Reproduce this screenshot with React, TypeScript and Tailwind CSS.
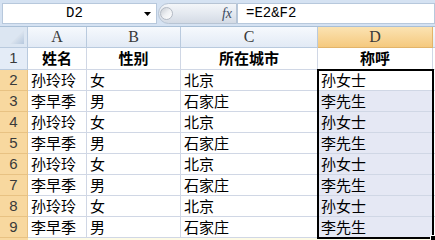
import React from 'react'

const rows = [
  ['孙玲玲', '女', '北京', '孙女士'],
  ['李早季', '男', '石家庄', '李先生'],
  ['孙玲玲', '女', '北京', '孙女士'],
  ['李早季', '男', '石家庄', '李先生'],
  ['孙玲玲', '女', '北京', '孙女士'],
  ['李早季', '男', '石家庄', '李先生'],
  ['孙玲玲', '女', '北京', '孙女士'],
  ['李早季', '男', '石家庄', '李先生'],
]

const cjk = "font-['Noto_Sans_CJK_SC','Noto_Sans',sans-serif]"

function FormulaBar() {
  return (
    <div className="h-[27px] flex items-start pt-[3px] bg-[#d5e2f2] border-b border-[#a9bfd6]">
      {/* Name box */}
      <div className="ml-[2px] w-[155px] h-[21px] bg-white border border-[#b7c8dc] flex items-center">
        <span className="flex-1 text-center pl-[2px] font-['Liberation_Mono',monospace] text-[14px] text-black">D2</span>
        <svg width="7" height="4" viewBox="0 0 7 4" className="mr-[5px]">
          <path d="M0 0H7L3.5 4Z" fill="#000" />
        </svg>
      </div>
      {/* handle + fx */}
      <div className="ml-[1px] h-[21px] w-[79px] flex items-center rounded-l-full bg-gradient-to-b from-[#f4f6f9] via-[#e4e9f0] to-[#d4dbe5] border border-[#b7c4d4]">
        <div className="w-[13px] h-[13px] ml-[1px] rounded-full bg-gradient-to-br from-[#c8ccd2] via-[#eef0f3] to-[#ffffff] border border-[#b3bac4]" />
        <div className="flex-1" />
        <span className="mr-[4px] font-['Liberation_Serif',serif] italic text-[14px] text-[#3b4a5e] leading-none">fx</span>
      </div>
      {/* Formula input */}
      <div className="flex-1 h-[21px] bg-white border border-[#b7c8dc] flex items-center pl-[8px]">
        <span className="font-['Liberation_Mono',monospace] text-[14px] text-black">=E2&amp;F2</span>
      </div>
    </div>
  )
}

function ColHeader({ label, active }: { label: string; active?: boolean }) {
  return (
    <div
      className={`flex items-center justify-center border-r border-b font-['Liberation_Serif',serif] text-[16px] ${
        active
          ? 'bg-gradient-to-b from-[#fbe3b2] to-[#f5c97e] border-[#e2b46a] text-[#3a3a3a]'
          : 'bg-gradient-to-b from-[#f6f9fd] to-[#e2eaf5] border-[#b9cade] text-[#3a3a3a]'
      }`}
    >
      {label}
    </div>
  )
}

function RowHeader({ n, active }: { n: number; active?: boolean }) {
  return (
    <div
      className={`flex items-center justify-center border-r border-b font-['Liberation_Sans',sans-serif] text-[15px] text-[#3a3a3a] ${
        active ? 'bg-[#f8d89f] border-[#e8c283]' : 'bg-[#e4ecf7] border-[#b9cade]'
      }`}
    >
      {n}
    </div>
  )
}

function Cell({ text, bold, center, bg }: { text?: string; bold?: boolean; center?: boolean; bg?: string }) {
  return (
    <div
      className={`flex items-center border-r border-b border-[#d0d7e5] ${cjk} text-[15px] text-black whitespace-nowrap overflow-hidden ${
        center ? 'justify-center' : 'pl-[3px]'
      } ${bold ? 'font-bold' : ''} ${bg ?? 'bg-white'}`}
    >
      {text}
    </div>
  )
}

export default function App() {
  return (
    <div className="w-[435px] h-[240px] overflow-hidden relative bg-white">
      <FormulaBar />
      <div className="grid grid-cols-[28px_59px_94px_137px_115px_1fr] grid-rows-[21px_22px_repeat(8,21px)_20px]">
        {/* Corner */}
        <div className="bg-[#dce6f2] border-r border-b border-[#b9cade] flex items-end justify-end p-[3px]">
          <svg width="14" height="14" viewBox="0 0 14 14">
            <defs>
              <linearGradient id="tri" x1="0" y1="0" x2="1" y2="1">
                <stop offset="0" stopColor="#ffffff" />
                <stop offset="1" stopColor="#b6c8de" />
              </linearGradient>
            </defs>
            <path d="M14 0V14H0Z" fill="url(#tri)" />
          </svg>
        </div>
        <ColHeader label="A" />
        <ColHeader label="B" />
        <ColHeader label="C" />
        <ColHeader label="D" active />
        <div className="bg-gradient-to-b from-[#f6f9fd] to-[#e2eaf5] border-b border-[#b9cade]" />

        {/* Row 1 */}
        <RowHeader n={1} />
        <Cell text="姓名" bold center />
        <Cell text="性别" bold center />
        <Cell text="所在城市" bold center />
        <Cell text="称呼" bold center />
        <Cell />

        {rows.map((r, i) => (
          <React.Fragment key={i}>
            <RowHeader n={i + 2} active />
            <Cell text={r[0]} />
            <Cell text={r[1]} />
            <Cell text={r[2]} />
            <Cell text={r[3]} bg={i === 0 ? 'bg-white' : 'bg-[#e5e8f4]'} />
            <Cell />
          </React.Fragment>
        ))}

        {/* Row 10 (partially visible) */}
        <div className="bg-[#f8d89f]" />
        <div className="bg-[#fdfbe6]" />
        <div className="bg-[#fdfbe6]" />
        <div className="bg-[#fdfbe6]" />
        <div className="bg-[#fdfbe6]" />
        <div className="bg-[#fdfbe6]" />
      </div>

      {/* Selection border D2:D9 */}
      <div className="absolute left-[317px] top-[69px] w-[117px] h-[170px] border-2 border-black pointer-events-none" />
      <div className="absolute left-[430px] top-[235px] w-[6px] h-[6px] bg-black border border-white" />
    </div>
  )
}
